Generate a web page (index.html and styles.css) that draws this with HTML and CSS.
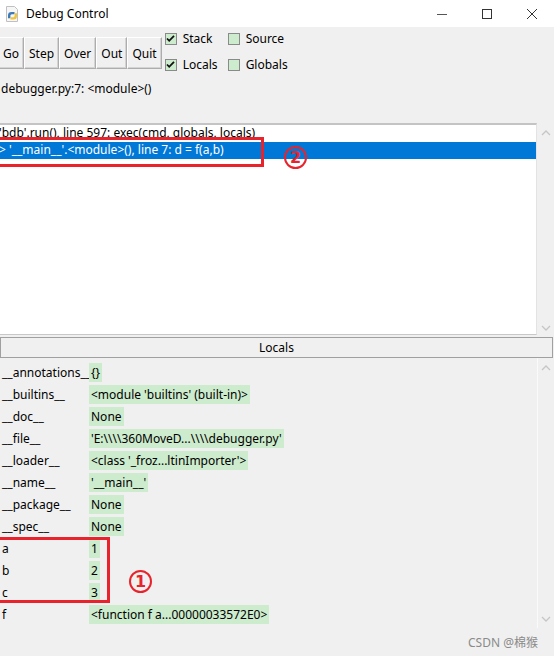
FILE: index.html
```html
<!DOCTYPE html>
<html>
<head>
<meta charset="utf-8">
<link rel="stylesheet" href="styles.css">
</head>
<body>
<div class="window">
  <div class="titlebar">
    <svg class="app-icon" width="16" height="16" viewBox="0 0 16 16">
      <path d="M2.5 0.5h8l3 3v12h-11z" fill="#f6f6f6" stroke="#c0c0c0" stroke-width="1"/>
      <path d="M4 9.5c0-2.5 1.2-3.5 3.5-3.5h3v2.2H8c-1.2 0-1.6.8-1.6 1.6v2.4H4z" fill="#3d7ab8"/>
      <path d="M13 10c0 2.5-1.2 3.5-3.5 3.5h-3v-2.2H9c1.2 0 1.600-.8 1.6-1.6V7.3H13z" fill="#f0c43a"/>
    </svg>
    <span class="title">Debug Control</span>
    <div class="win-controls">
      <svg width="12" height="12" viewBox="0 0 12 12"><path d="M1 6.5h10" stroke="#555" stroke-width="1"/></svg>
      <svg width="12" height="12" viewBox="0 0 12 12"><rect x="1.5" y="1.5" width="9" height="9" fill="none" stroke="#333" stroke-width="1"/></svg>
      <svg width="12" height="12" viewBox="0 0 12 12"><path d="M1 1l10 10M11 1L1 11" stroke="#333" stroke-width="1"/></svg>
    </div>
  </div>

  <div class="toolbar">
    <div class="buttons">
      <span class="btn btn-go">Go</span>
      <span class="btn">Step</span>
      <span class="btn">Over</span>
      <span class="btn">Out</span>
      <span class="btn">Quit</span>
    </div>
    <div class="checks">
      <label class="check"><span class="box checked"><svg width="9" height="9" viewBox="0 0 9 9"><path d="M1 4.5l2.2 2.3L8 1.8" fill="none" stroke="#111" stroke-width="1.8"/></svg></span>Stack</label>
      <label class="check"><span class="box"></span>Source</label>
      <label class="check"><span class="box checked"><svg width="9" height="9" viewBox="0 0 9 9"><path d="M1 4.5l2.2 2.3L8 1.8" fill="none" stroke="#111" stroke-width="1.8"/></svg></span>Locals</label>
      <label class="check"><span class="box"></span>Globals</label>
    </div>
  </div>

  <div class="status">debugger.py:7: &lt;module&gt;()</div>

  <div class="stack">
    <div class="stack-list">
      <div class="stack-row">'bdb'.run(), line 597: exec(cmd, globals, locals)</div>
      <div class="stack-row selected">&gt; '__main__'.&lt;module&gt;(), line 7: d = f(a,b)</div>
    </div>
    <div class="scrollbar">
      <svg width="10" height="6" viewBox="0 0 10 6"><path d="M1 5l4-4 4 4" fill="none" stroke="#c6c6c6" stroke-width="1.3"/></svg>
      <svg width="10" height="6" viewBox="0 0 10 6"><path d="M1 1l4 4 4-4" fill="none" stroke="#c6c6c6" stroke-width="1.3"/></svg>
    </div>
    <div class="mark mark-stack"></div>
    <div class="circled circled-2">2</div>
  </div>

  <div class="locals-header">Locals</div>

  <div class="locals">
    <div class="locals-list">
      <div class="var"><span class="name">__annotations__</span><span class="val">{}</span></div>
      <div class="var"><span class="name">__builtins__</span><span class="val">&lt;module 'builtins' (built-in)&gt;</span></div>
      <div class="var"><span class="name">__doc__</span><span class="val">None</span></div>
      <div class="var"><span class="name">__file__</span><span class="val">'E:\\\\360MoveD...\\\\debugger.py'</span></div>
      <div class="var"><span class="name">__loader__</span><span class="val">&lt;class '_froz...ltinImporter'&gt;</span></div>
      <div class="var"><span class="name">__name__</span><span class="val">'__main__'</span></div>
      <div class="var"><span class="name">__package__</span><span class="val">None</span></div>
      <div class="var"><span class="name">__spec__</span><span class="val">None</span></div>
      <div class="var"><span class="name">a</span><span class="val">1</span></div>
      <div class="var"><span class="name">b</span><span class="val">2</span></div>
      <div class="var"><span class="name">c</span><span class="val">3</span></div>
      <div class="var"><span class="name">f</span><span class="val">&lt;function f a...00000033572E0&gt;</span></div>
      <div class="mark mark-locals"></div>
      <div class="circled circled-1">1</div>
    </div>
    <div class="scrollbar scrollbar-locals">
      <svg width="10" height="6" viewBox="0 0 10 6"><path d="M1 5l4-4 4 4" fill="none" stroke="#c6c6c6" stroke-width="1.3"/></svg>
      <svg width="10" height="6" viewBox="0 0 10 6"><path d="M1 1l4 4 4-4" fill="none" stroke="#c6c6c6" stroke-width="1.3"/></svg>
    </div>
  </div>

  <div class="footer"><span class="watermark">CSDN @棉猴</span></div>
</div>
</body>
</html>
```

FILE: styles.css
```css
* { box-sizing: border-box; }
html, body {
  margin: 0;
  padding: 0;
  width: 554px;
  height: 656px;
  overflow: hidden;
  background: #f0f0f0;
  font-family: "Noto Sans", "Noto Sans CJK SC", sans-serif;
  font-size: 12px;
  color: #000;
}
.window { width: 554px; height: 656px; display: flex; flex-direction: column; }

.titlebar {
  height: 27px;
  background: #fff;
  display: flex;
  align-items: center;
  padding-left: 4px;
}
.app-icon { margin-right: 6px; }
.title { font-size: 12px; color: #000; }
.win-controls {
  margin-left: auto;
  display: flex;
  gap: 33px;
  padding-right: 16px;
  align-items: center;
}

.toolbar {
  height: 54px;
  display: flex;
  align-items: flex-start;
}
.buttons {
  display: flex;
  margin-top: 10px;
  margin-left: -3px;
}
.btn {
  height: 32px;
  display: flex;
  align-items: center;
  padding: 0 4px;
  border: 1px solid #adadad;
  border-left-color: #fff;
  border-top-color: #fff;
  box-shadow: inset -1px -1px 0 #d4d4d4;
  font-size: 12px;
}
.btn-go { padding-left: 5px; padding-right: 4px; }
.checks {
  margin-left: 3px;
  margin-top: 5px;
  display: grid;
  grid-template-columns: 63px auto;
  row-gap: 13px;
}
.check {
  display: flex;
  align-items: center;
  height: 13px;
  font-size: 12px;
}
.box {
  width: 12px;
  height: 12px;
  border: 1px solid #8a8a8a;
  background: #cdebcd;
  margin-right: 6px;
  display: flex;
  align-items: center;
  justify-content: center;
}

.status {
  height: 42px;
  padding-left: 1px;
  line-height: 16px;
  font-size: 12px;
}

.stack {
  height: 212px;
  display: flex;
  position: relative;
}
.stack-list {
  flex: 1;
  background: #fff;
  border-top: 2px solid #c4c4c4;
  border-bottom: 1px solid #c8c8c8;
  border-right: 1px solid #e3e3e3;
  overflow: hidden;
}
.stack-row {
  height: 17px;
  line-height: 16px;
  padding-left: 0;
  margin-left: -1px;
  white-space: nowrap;
  font-size: 12px;
}
.stack-row.selected { background: #0078d7; color: #fff; }
.scrollbar {
  width: 17px;
  display: flex;
  flex-direction: column;
  justify-content: space-between;
  align-items: center;
  padding: 7px 0 4px;
  background: #f0f0f0;
}

.mark {
  position: absolute;
  border: 3px solid #e8232b;
  pointer-events: none;
}
.mark-stack { left: -3px; top: 14px; width: 267px; height: 30px; }
.circled {
  position: absolute;
  width: 23px;
  height: 23px;
  border: 2px solid #e8232b;
  border-radius: 50%;
  color: #e8232b;
  font-family: "DejaVu Sans", sans-serif;
  font-weight: bold;
  font-size: 16px;
  display: flex;
  align-items: center;
  justify-content: center;
  line-height: 1;
}
.circled-2 { left: 284px; top: 23px; }

.locals-header {
  margin-top: 2px;
  height: 21px;
  width: 553px;
  border: 1px solid #a0a0a0;
  display: flex;
  align-items: center;
  justify-content: center;
  font-size: 12px;
}

.locals {
  height: 270px;
  display: flex;
}
.locals-list {
  flex: 1;
  position: relative;
  padding-top: 3px;
}
.var {
  height: 22px;
  display: flex;
  align-items: center;
  white-space: nowrap;
}
.name { width: 89px; padding-left: 2px; font-size: 12px; }
.val {
  background: #cdebcd;
  height: 19px;
  line-height: 19px;
  padding: 0 2px;
  font-size: 12px;
}
.mark-locals { left: -3px; top: 179px; width: 113px; height: 66px; }
.circled-1 { left: 129px; top: 212px; }
.scrollbar-locals {
  border-left: 1px solid #fafafa;
  padding: 7px 0 6px;
}

.footer {
  flex: 1;
  display: flex;
  justify-content: flex-end;
  align-items: center;
  padding-right: 16px;
}
.watermark { color: #8a8a8a; font-size: 12px; }
```
